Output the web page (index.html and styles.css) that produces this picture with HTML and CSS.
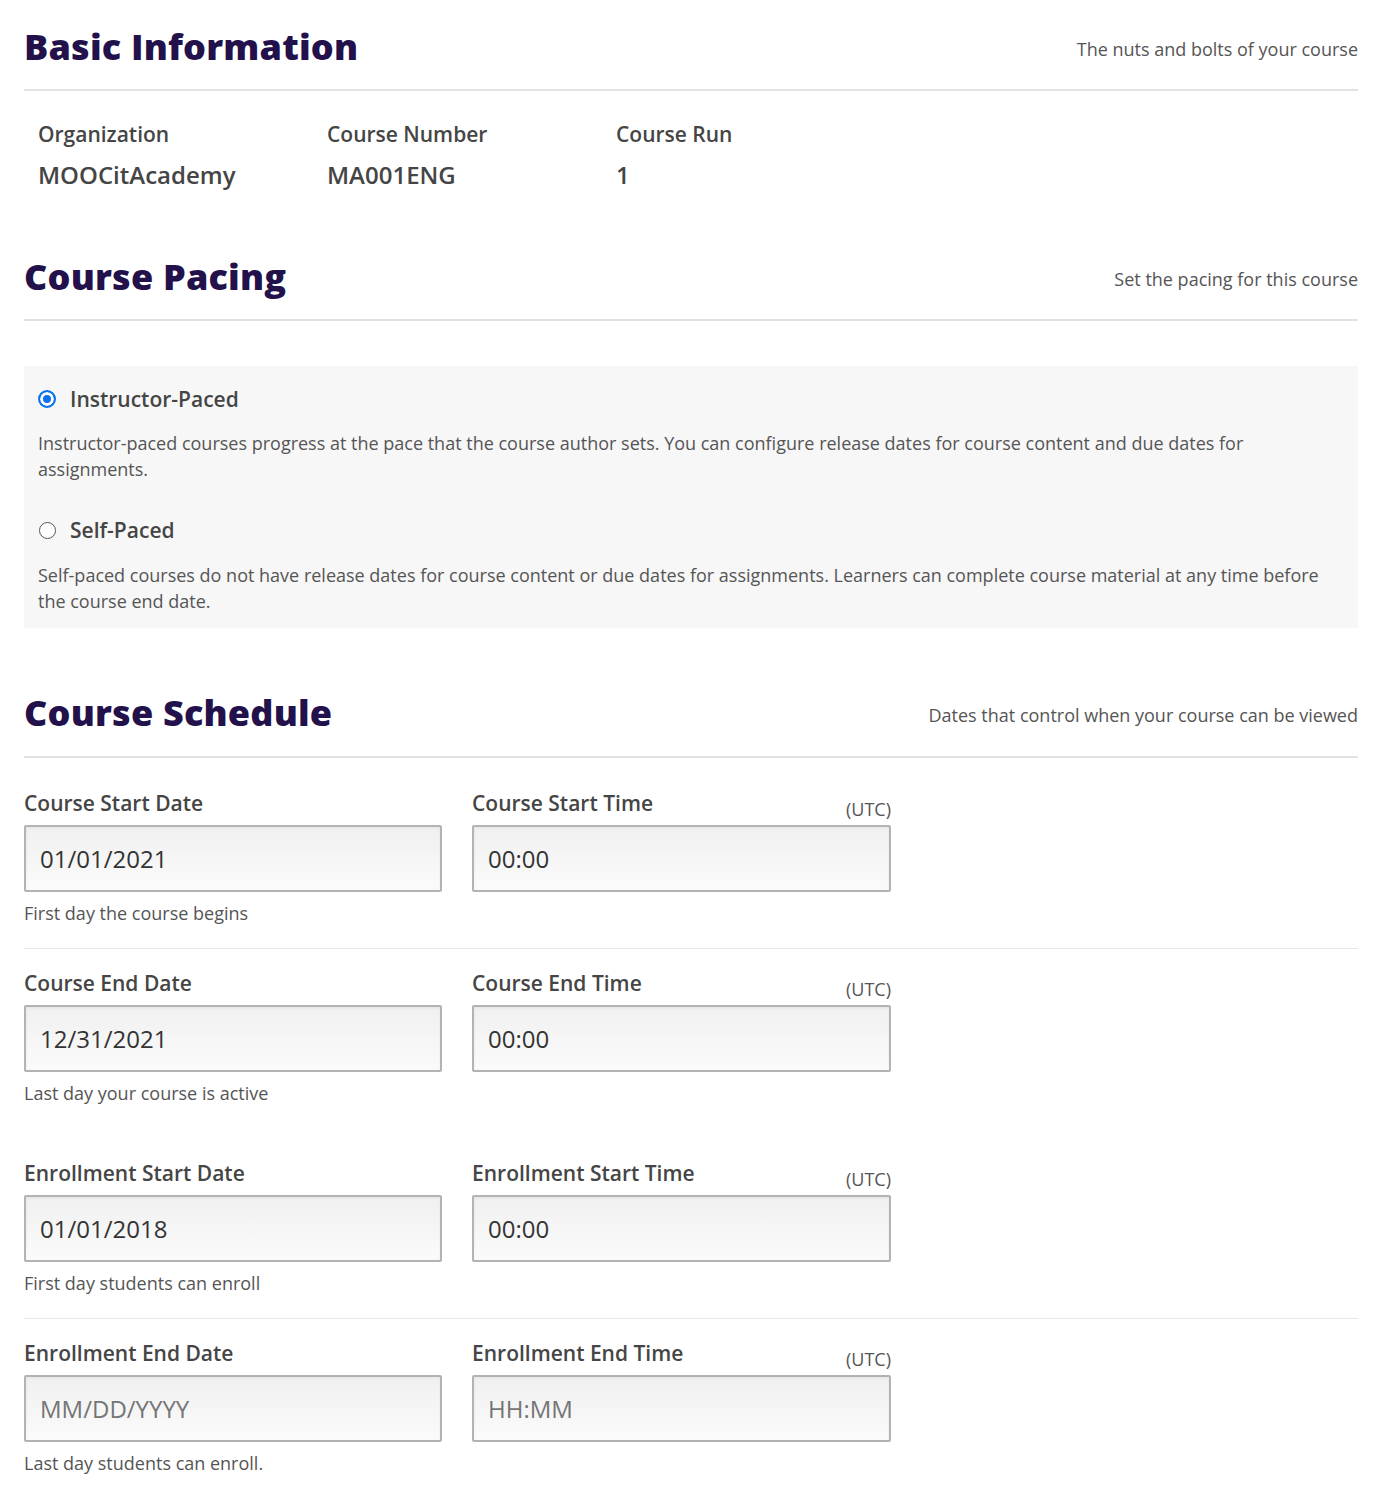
FILE: index.html
```html
<!DOCTYPE html>
<html lang="en">
<head>
<meta charset="utf-8">
<title>Schedule &amp; Details</title>
<link rel="stylesheet" href="styles.css">
</head>
<body>
<main class="page">
  <section class="section">
    <header class="section-header">
      <h2 class="section-title">Basic Information</h2>
      <p class="section-sub">The nuts and bolts of your course</p>
    </header>
    <div class="info-grid">
      <div class="info-item">
        <div class="info-label">Organization</div>
        <div class="info-value">MOOCitAcademy</div>
      </div>
      <div class="info-item">
        <div class="info-label">Course Number</div>
        <div class="info-value">MA001ENG</div>
      </div>
      <div class="info-item">
        <div class="info-label">Course Run</div>
        <div class="info-value">1</div>
      </div>
    </div>
  </section>

  <section class="section pacing-section">
    <header class="section-header">
      <h2 class="section-title">Course Pacing</h2>
      <p class="section-sub">Set the pacing for this course</p>
    </header>
    <div class="pacing-box">
      <div class="pace-option">
        <div class="pace-head">
          <span class="radio radio-checked"></span>
          <span class="pace-name">Instructor-Paced</span>
        </div>
        <p class="pace-desc">Instructor-paced courses progress at the pace that the course author sets. You can configure release dates for course content and due dates for assignments.</p>
      </div>
      <div class="pace-option pace-option-second">
        <div class="pace-head">
          <span class="radio"></span>
          <span class="pace-name">Self-Paced</span>
        </div>
        <p class="pace-desc pace-desc-second">Self-paced courses do not have release dates for course content or due dates for assignments. Learners can complete course material at any time before the course end date.</p>
      </div>
    </div>
  </section>

  <section class="section schedule-section">
    <header class="section-header">
      <h2 class="section-title">Course Schedule</h2>
      <p class="section-sub">Dates that control when your course can be viewed</p>
    </header>

    <div class="group">
      <div class="date-row">
        <div class="field">
          <div class="field-top"><label class="field-label">Course Start Date</label></div>
          <div class="field-input">01/01/2021</div>
          <div class="field-help">First day the course begins</div>
        </div>
        <div class="field">
          <div class="field-top"><label class="field-label">Course Start Time</label><span class="utc">(UTC)</span></div>
          <div class="field-input">00:00</div>
        </div>
      </div>
      <div class="row-divider"></div>
      <div class="date-row">
        <div class="field">
          <div class="field-top"><label class="field-label">Course End Date</label></div>
          <div class="field-input">12/31/2021</div>
          <div class="field-help">Last day your course is active</div>
        </div>
        <div class="field">
          <div class="field-top"><label class="field-label">Course End Time</label><span class="utc">(UTC)</span></div>
          <div class="field-input">00:00</div>
        </div>
      </div>
    </div>

    <div class="group group-second">
      <div class="date-row">
        <div class="field">
          <div class="field-top"><label class="field-label">Enrollment Start Date</label></div>
          <div class="field-input">01/01/2018</div>
          <div class="field-help">First day students can enroll</div>
        </div>
        <div class="field">
          <div class="field-top"><label class="field-label">Enrollment Start Time</label><span class="utc">(UTC)</span></div>
          <div class="field-input">00:00</div>
        </div>
      </div>
      <div class="row-divider"></div>
      <div class="date-row">
        <div class="field">
          <div class="field-top"><label class="field-label">Enrollment End Date</label></div>
          <div class="field-input placeholder">MM/DD/YYYY</div>
          <div class="field-help">Last day students can enroll.</div>
        </div>
        <div class="field">
          <div class="field-top"><label class="field-label">Enrollment End Time</label><span class="utc">(UTC)</span></div>
          <div class="field-input placeholder">HH:MM</div>
        </div>
      </div>
    </div>
  </section>
</main>
</body>
</html>
```

FILE: styles.css
```css
* { box-sizing: border-box; }

body {
  margin: 0;
  background: #ffffff;
  font-family: "Open Sans", "Liberation Sans", sans-serif;
  color: #454545;
}

.page {
  width: 1334px;
  margin-left: 24px;
  padding-top: 24px;
  padding-bottom: 20px;
}

.section-header {
  display: flex;
  justify-content: space-between;
  align-items: center;
  padding-bottom: 19px;
  border-bottom: 2px solid #e2e2e2;
}

.schedule-section .section-header { padding-bottom: 20px; }

.section-title {
  margin: 0;
  font-family: "Open Sans", "Liberation Sans", sans-serif;
  font-weight: 800;
  font-size: 36px;
  line-height: 46px;
  color: #22114a;
  letter-spacing: 0.2px;
}

.section-sub {
  margin: 4px 0 0;
  font-size: 18px;
  line-height: 26px;
  color: #555555;
}

.info-grid {
  display: grid;
  grid-template-columns: 289px 289px 289px;
  padding: 29px 14px 0;
}

.info-label {
  font-size: 21px;
  line-height: 28px;
  font-weight: 600;
  color: #454545;
}

.info-value {
  margin-top: 11px;
  font-size: 24px;
  line-height: 32px;
  font-weight: 600;
  color: #454545;
}

.pacing-section { margin-top: 63px; }

.pacing-box {
  margin-top: 45px;
  background: #f7f7f7;
  padding: 19px 14px 14px;
}

.pace-option-second { margin-top: 34px; }

.pace-head {
  display: flex;
  align-items: center;
  height: 28px;
}

.radio {
  width: 17px;
  height: 17px;
  border-radius: 50%;
  border: 1.5px solid #555555;
  background: #ffffff;
  margin-left: 1px;
  margin-right: 14px;
  flex: none;
}

.radio-checked {
  width: 18px;
  height: 18px;
  margin-left: 0;
  margin-right: 14px;
  border: 2px solid #0a72ec;
  background: #0a72ec;
  box-shadow: inset 0 0 0 3px #ffffff;
}

.pace-name {
  font-size: 21px;
  font-weight: 600;
  color: #454545;
}

.pace-desc {
  margin: 17px 0 0;
  font-size: 18px;
  line-height: 26px;
  color: #555555;
}

.pace-desc-second { margin-top: 18px; }

.schedule-section { margin-top: 62px; }

.group { margin-top: 31px; }
.group-second { margin-top: 54px; }

.date-row {
  display: grid;
  grid-template-columns: 418px 419px;
  column-gap: 30px;
}

.field-top {
  display: flex;
  justify-content: space-between;
  align-items: flex-end;
  height: 28px;
  margin-bottom: 8px;
}

.field-label {
  font-size: 21px;
  line-height: 28px;
  font-weight: 600;
  color: #454545;
}

.utc {
  font-size: 18px;
  line-height: 22px;
  color: #555555;
  margin-bottom: -3px;
}

.field-input {
  height: 67px;
  border: 2px solid #b3b3b3;
  border-radius: 2px;
  background: linear-gradient(#f0f0f0, #fbfbfb);
  box-shadow: inset 0 1px 3px rgba(0, 0, 0, 0.06);
  padding: 0 14px;
  display: flex;
  align-items: center;
  font-size: 24px;
  color: #333333;
}

.field-input.placeholder { color: #757575; }

.field-help {
  margin-top: 9px;
  font-size: 18px;
  line-height: 24px;
  color: #555555;
}

.row-divider {
  height: 1px;
  background: #e8e8e8;
  margin: 23px 0 20px;
}
```
